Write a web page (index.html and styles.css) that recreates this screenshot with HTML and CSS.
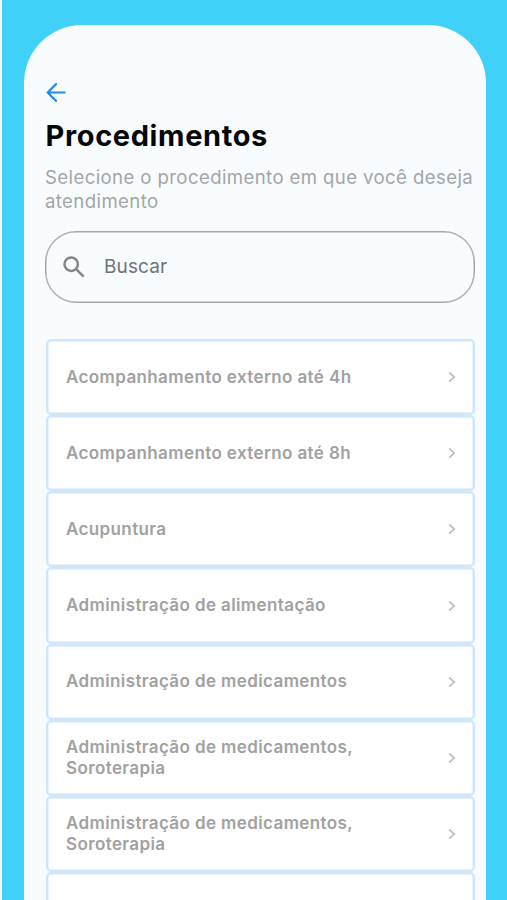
FILE: index.html
```html
<!DOCTYPE html>
<html lang="pt-BR">
<head>
<meta charset="utf-8">
<title>Procedimentos</title>
<link rel="stylesheet" href="styles.css">
</head>
<body>
<svg class="defs" aria-hidden="true"><symbol id="chevron" viewBox="0 0 8 12"><path d="M1.2 1.3 6.2 6 1.2 10.7"/></symbol></svg>
<main class="phone">
  <svg class="back" viewBox="0 0 20 20" aria-hidden="true"><path d="M19 10H1.5M10 1.2 1.2 10 10 18.8"/></svg>
  <h1 class="title">Procedimentos</h1>
  <p class="subtitle">Selecione o procedimento em que você deseja<br>atendimento</p>
  <div class="search">
    <svg class="search-icon" viewBox="0 0 22 22" aria-hidden="true"><circle cx="8.2" cy="8.2" r="6.7"/><path d="m13.2 13.2 7.4 7.4"/></svg>
    <span class="placeholder">Buscar</span>
  </div>
  <ul class="list">
    <li class="item"><span>Acompanhamento externo até 4h</span><svg class="chevron"><use href="#chevron"/></svg></li>
    <li class="item"><span>Acompanhamento externo até 8h</span><svg class="chevron"><use href="#chevron"/></svg></li>
    <li class="item"><span>Acupuntura</span><svg class="chevron"><use href="#chevron"/></svg></li>
    <li class="item"><span>Administração de alimentação</span><svg class="chevron"><use href="#chevron"/></svg></li>
    <li class="item"><span>Administração de medicamentos</span><svg class="chevron"><use href="#chevron"/></svg></li>
    <li class="item"><span>Administração de medicamentos,<br>Soroterapia</span><svg class="chevron"><use href="#chevron"/></svg></li>
    <li class="item"><span>Administração de medicamentos,<br>Soroterapia</span><svg class="chevron"><use href="#chevron"/></svg></li>
    <li class="item"></li>
  </ul>
</main>
</body>
</html>
```

FILE: styles.css
```css
* { box-sizing: border-box; }
html, body { height: 100%; }
body {
  margin: 0;
  overflow: hidden;
  padding: 25px 21px 0 22px;
  border-left: 2px solid #f3fcff;
  background: #3fd1f7;
  font-family: Inter, "Liberation Sans", sans-serif;
}
.defs { display: none; }
.phone {
  height: 100%;
  padding: 58px 11px 0 21px;
  border-radius: 58px 58px 0 0;
  background: #f8fcff;
  overflow: hidden;
}
.back {
  display: block;
  width: 20px;
  height: 19px;
  margin-left: 1px;
  fill: none;
  stroke: #258be5;
  stroke-width: 2.3;
  stroke-linecap: round;
  stroke-linejoin: round;
}
.title {
  margin: 15px 0 0 0.6px;
  font-size: 29px;
  line-height: 38px;
  font-weight: 700;
  letter-spacing: 0.62px;
  color: #060708;
}
.subtitle {
  margin: 11px 0 0;
  font-size: 18.6px;
  line-height: 23.5px;
  letter-spacing: 0.39px;
  color: #a3a5a6;
  white-space: nowrap;
}
.search {
  display: flex;
  align-items: center;
  gap: 19px;
  width: 430px;
  height: 72px;
  margin-top: 18px;
  padding-left: 17px;
  border: 1px solid #a4a7a9;
  border-radius: 31px;
  box-shadow: inset 0 0 0 0.5px #a4a7a9;
}
.search-icon {
  width: 22px;
  height: 22px;
  fill: none;
  stroke: #848789;
  stroke-width: 2.5;
}
.placeholder {
  margin-top: -2px;
  font-size: 19px;
  letter-spacing: 0.12px;
  color: #707375;
}
.list {
  width: 429px;
  margin: 36.2px 0 0 0.7px;
  padding: 0;
  list-style: none;
}
.item {
  display: flex;
  align-items: center;
  justify-content: space-between;
  height: 76.1px;
  padding: 0 17px 0 18.3px;
  border: 2px solid #cfe6fb;
  border-radius: 5px;
  background: #fff;
  box-shadow: inset 0 0 0 0.5px #cfe6fb;
  font-size: 17px;
  line-height: 21px;
  font-weight: 600;
  letter-spacing: 0.39px;
  color: #a1a1a1;
  white-space: nowrap;
}
.chevron {
  width: 8px;
  height: 12px;
  fill: none;
  stroke: #bfc0c1;
  stroke-width: 1.8;
}
```
